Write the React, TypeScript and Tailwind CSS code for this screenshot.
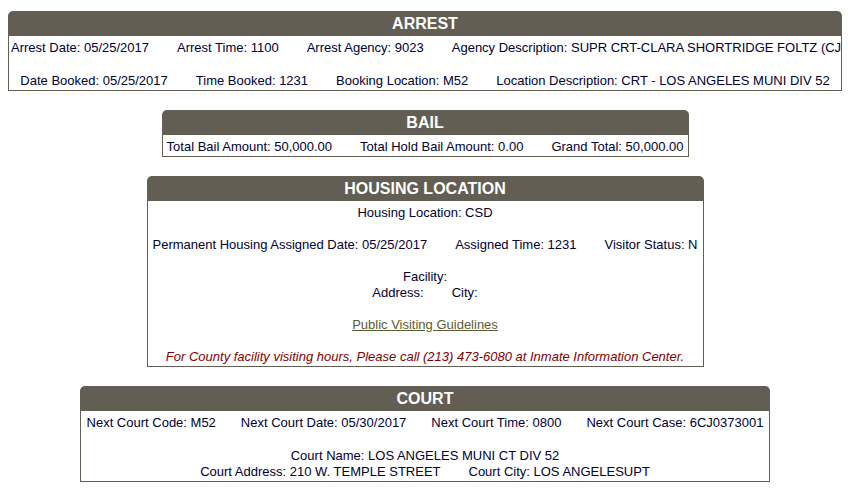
import React from "react";

type SectionProps = {
  title: string;
  width: string;
  children: React.ReactNode;
};

const Section: React.FC<SectionProps> = ({ title, width, children }) => {
  return (
    <div className={`${width} mx-auto mt-[19px] first:mt-[11px]`}>
      <div className="h-[25px] rounded-t-[5px] bg-[#625e53] text-center text-[16px] font-bold leading-[26px] text-white">
        {title}
      </div>
      <div className="overflow-hidden whitespace-nowrap border border-t-0 border-[#625e53] px-[2px] pt-[4px] pb-[1px] text-center text-[13px] leading-4 text-[#000033]">
        {children}
      </div>
    </div>
  );
};

const Row: React.FC<{ items: string[]; tight?: boolean }> = ({ items, tight }) => {
  return (
    <div className="h-4">
      {items.map((item, i) => (
        <span key={i} className={i === 0 ? "" : tight ? "ml-[25px]" : "ml-[28px]"}>
          {item}
        </span>
      ))}
    </div>
  );
};

export default function App() {
  return (
    <div className="w-[850px] bg-white pb-4 font-['Liberation_Sans',Arial,sans-serif]">
      <Section title="ARREST" width="w-[834px]">
        <Row
          items={[
            "Arrest Date: 05/25/2017",
            "Arrest Time: 1100",
            "Arrest Agency: 9023",
            "Agency Description: SUPR CRT-CLARA SHORTRIDGE FOLTZ (CJ",
          ]}
        />
        <div className="h-[17px]" />
        <Row
          items={[
            "Date Booked: 05/25/2017",
            "Time Booked: 1231",
            "Booking Location: M52",
            "Location Description: CRT - LOS ANGELES MUNI DIV 52",
          ]}
        />
      </Section>

      <Section title="BAIL" width="w-[527px]">
        <Row
          items={[
            "Total Bail Amount: 50,000.00",
            "Total Hold Bail Amount: 0.00",
            "Grand Total: 50,000.00",
          ]}
        />
      </Section>

      <Section title="HOUSING LOCATION" width="w-[557px]">
        <Row items={["Housing Location: CSD"]} />
        <div className="h-4" />
        <Row
          items={[
            "Permanent Housing Assigned Date: 05/25/2017",
            "Assigned Time: 1231",
            "Visitor Status: N",
          ]}
        />
        <div className="h-4" />
        <Row items={["Facility:"]} />
        <Row items={["Address:", "City:"]} />
        <div className="h-4" />
        <div className="h-4">
          <a href="#" className="text-[#5c5c33] underline">
            Public Visiting Guidelines
          </a>
        </div>
        <div className="h-4" />
        <div className="h-4 italic text-[#800000]">
          For County facility visiting hours, Please call (213) 473-6080 at
          Inmate Information Center.
        </div>
      </Section>

      <Section title="COURT" width="w-[690px]">
        <Row
          tight
          items={[
            "Next Court Code: M52",
            "Next Court Date: 05/30/2017",
            "Next Court Time: 0800",
            "Next Court Case: 6CJ0373001",
          ]}
        />
        <div className="h-[17px]" />
        <Row items={["Court Name: LOS ANGELES MUNI CT DIV 52"]} />
        <Row
          items={[
            "Court Address: 210 W. TEMPLE STREET",
            "Court City: LOS ANGELESUPT",
          ]}
        />
      </Section>
    </div>
  );
}
